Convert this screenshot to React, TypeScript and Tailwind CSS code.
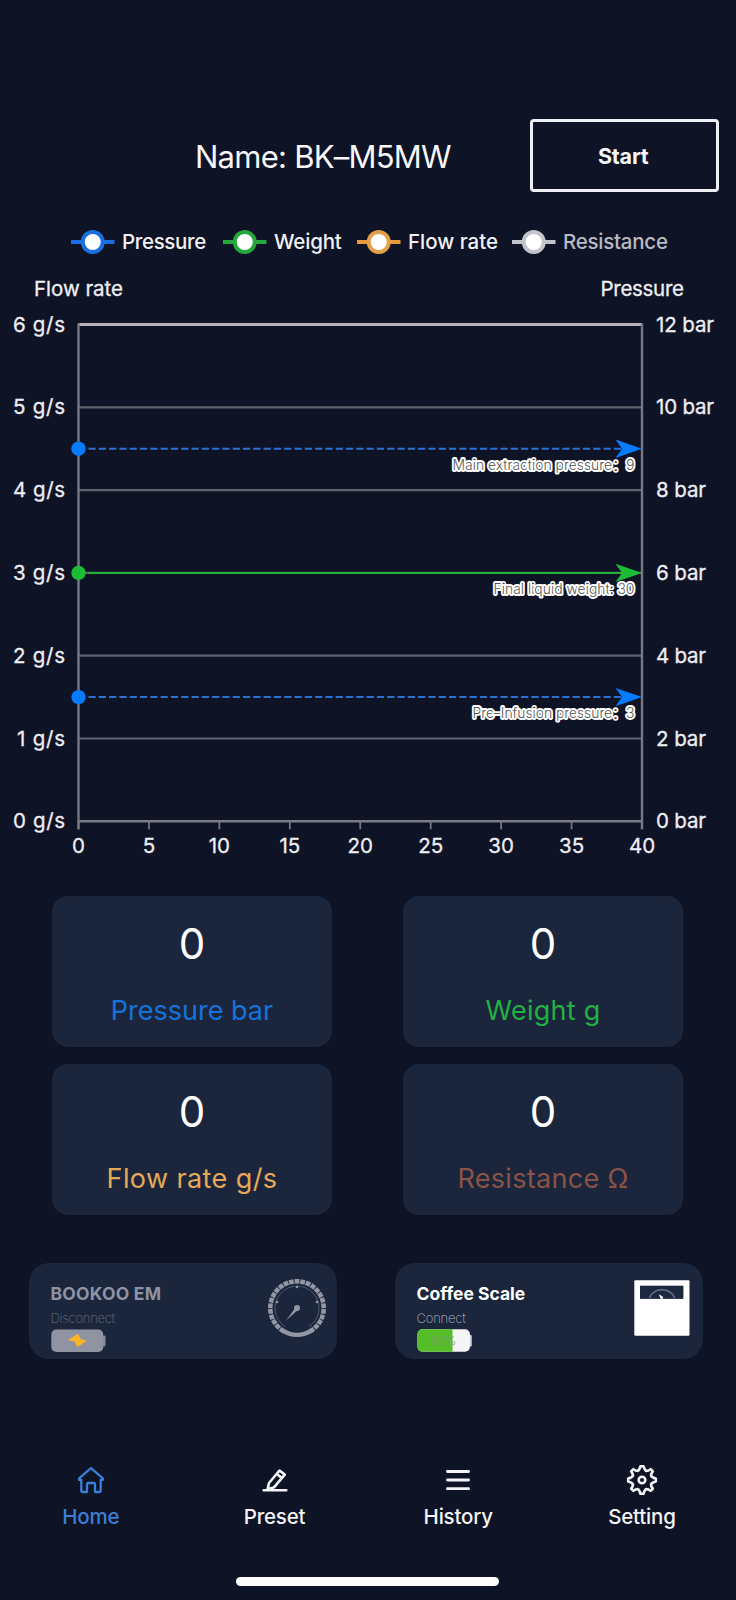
import type { ReactNode } from "react";

const LEFT = 78.5;
const RIGHT = 642;
const TOP = 54.5;
const STEP = 82.8;
const BOTTOM = TOP + STEP * 6;

const legend = [
  { label: "Pressure", line: "#1a6fe0", ring: "#1a6fe0", width: "w-[152px]", text: "text-[#f1f1f6] tracking-[-0.35px]" },
  { label: "Weight", line: "#25a83c", ring: "#25a83c", width: "w-[134px]", text: "text-[#f1f1f6] tracking-[-0.2px]" },
  { label: "Flow rate", line: "#e8993a", ring: "#e2a04c", width: "w-[155px]", text: "text-[#f1f1f6]" },
  { label: "Resistance", line: "#c4c5cc", ring: "#c4c5cc", width: "w-[156px]", text: "text-[#b9bac3] tracking-[-0.25px]" },
];

const lines = [
  { y: TOP + STEP * 1.5, color: "#067bff", stroke: "#2c71cf", label: "Main extraction pressure：9", len: 182, solid: false },
  { y: TOP + STEP * 3, color: "#1cbc35", stroke: "#22b03c", label: "Final liquid weight: 30", len: 141, solid: true },
  { y: TOP + STEP * 4.5, color: "#067bff", stroke: "#2c71cf", label: "Pre–Infusion pressure：3", len: 162, solid: false },
];

const metrics = [
  { label: "Pressure bar", color: "text-[#1473dd]" },
  { label: "Weight g", color: "text-[#22b045] tracking-[0.25px]" },
  { label: "Flow rate g/s", color: "text-[#e6a958] tracking-[0.4px]" },
  { label: "Resistance Ω", color: "text-[#8b5346] tracking-[0.3px]" },
];

function Chart() {
  return (
    <svg
      width="736"
      height="610"
      viewBox="0 0 736 610"
      className="block"
      fontFamily="Inter, 'Noto Sans CJK SC', sans-serif"
      fontSize="20.5"
      fill="#eeeef4"
    >
      <text x="34" y="25.5" textLength="89" stroke="#eeeef4" strokeWidth="0.3">Flow rate</text>
      <text x="600.5" y="25.5" textLength="83.5" stroke="#eeeef4" strokeWidth="0.3">Pressure</text>
      {[0, 1, 2, 3, 4, 5, 6].map((i) => {
        const y = TOP + STEP * i;
        return (
          <g key={i}>
            <line
              x1={LEFT}
              x2={RIGHT}
              y1={y}
              y2={y}
              stroke={i === 0 ? "#b5b4bd" : i === 6 ? "#7a7b87" : "#62636f"}
              strokeWidth={i === 0 ? 3 : i === 6 ? 2.6 : 2.2}
            />
            <g stroke="#eeeef4" strokeWidth="0.3">
              <text x="65" y={y + 7} textAnchor="end" textLength={i === 5 ? 48 : 52}>{`${6 - i} g/s`}</text>
              <text x="656" y={y + 7} textLength={i < 2 ? 58 : 50}>{`${12 - 2 * i} bar`}</text>
            </g>
          </g>
        );
      })}
      <line x1={LEFT} x2={LEFT} y1={TOP - 1} y2={BOTTOM + 8} stroke="#777884" strokeWidth="2.4" />
      <line x1={RIGHT} x2={RIGHT} y1={TOP - 1} y2={BOTTOM + 8} stroke="#777884" strokeWidth="2.4" />
      {[0, 1, 2, 3, 4, 5, 6, 7, 8].map((i) => {
        const x = LEFT + ((RIGHT - LEFT) / 8) * i;
        return (
          <g key={i}>
            <line x1={x} x2={x} y1={BOTTOM} y2={BOTTOM + 8} stroke="#777884" strokeWidth="1.8" />
            <text x={x} y="582.5" textAnchor="middle" stroke="#eeeef4" strokeWidth="0.3">{i * 5}</text>
          </g>
        );
      })}
      {lines.map((l) => (
        <g key={l.label}>
          <line
            x1={LEFT + 10}
            x2="622"
            y1={l.y}
            y2={l.y}
            stroke={l.stroke}
            strokeWidth="2"
            strokeDasharray={l.solid ? undefined : "7.2 3.1"}
          />
          <circle cx={LEFT} cy={l.y} r="7.2" fill={l.color} />
          <path d={`M642 ${l.y}L615.5 ${l.y - 9.2}L622 ${l.y}L615.5 ${l.y + 9.2}Z`} fill={l.color} />
          <text
            x="634.5"
            y={l.y + 21}
            textAnchor="end"
            fontSize="14"
            fontWeight="300"
            textLength={l.len}
            fill="#555555"
            stroke="#ffffff"
            strokeWidth="3.8"
            strokeLinejoin="round"
            paintOrder="stroke"
          >
            {l.label}
          </text>
        </g>
      ))}
    </svg>
  );
}

function Gauge() {
  const ticks = Array.from({ length: 25 }, (_, i) => -146 + (i * 292) / 24);
  return (
    <svg width="60" height="60" viewBox="-30 -30 60 60">
      {ticks.map((a) => (
        <rect key={a} x="-2.4" y="-29" width="4.8" height="4.6" fill="#9396a4" transform={`rotate(${a})`} />
      ))}
      <path d="M-14 22.9A26.8 26.8 0 0 0 14 22.9" fill="none" stroke="#9396a4" strokeWidth="4.4" />
      <path d="M-12 18.5A22 22 0 1 1 12 18.5" fill="none" stroke="#505a6c" strokeWidth="1" />
      <circle cx="0" cy="-21" r="1.3" fill="#9396a4" />
      <circle cx="-20" cy="-6" r="1.3" fill="#9396a4" />
      <circle cx="20" cy="-6" r="1.3" fill="#9396a4" />
      <circle cx="0" cy="0" r="3" fill="#9396a4" />
      <path d="M-1.8 0L-11 12.5L1 2Z" fill="#9396a4" />
    </svg>
  );
}

function ScaleIcon() {
  return (
    <svg width="56" height="56" viewBox="0 0 56 56">
      <rect x="0.3" y="0.2" width="55.2" height="55.6" rx="1" fill="#fff" />
      <rect x="6" y="5.7" width="43.4" height="13.2" fill="#1c2740" />
      <path d="M15.5 18A12.7 10 0 0 1 40.5 18" fill="none" stroke="#677084" strokeWidth="1.6" />
      <path d="M24.8 14.2L28.6 16.4L29.2 18.9L26.5 18.6Z" fill="#fff" />
    </svg>
  );
}

function Tab({ label, active, children }: { label: string; active?: boolean; children: ReactNode }) {
  return (
    <div className={`flex w-[183.7px] flex-col items-center ${active ? "text-[#3c7fd8]" : "text-[#f4f4f8]"}`}>
      <svg width="32" height="32" viewBox="0 0 32 32" fill="none" stroke="currentColor" strokeWidth="2.6" strokeLinejoin="round" strokeLinecap="round">
        {children}
      </svg>
      <span className="mt-[7px] text-[20.5px] leading-[28px] font-[450] tracking-[-0.2px]">{label}</span>
    </div>
  );
}

export default function App() {
  return (
    <div className="flex h-[1600px] w-[736px] flex-col overflow-hidden bg-[#0e1325] font-[Inter,'Noto_Sans_CJK_SC',sans-serif] text-white">
      <header className="flex h-[192px] items-end justify-between pr-[17px] pl-[195px]">
        <h1 className="mb-[12px] text-[31px] leading-[46px] font-normal tracking-[-0.75px] whitespace-nowrap text-[#f7f7fa]">Name: BK–M5MW</h1>
        <button className="flex h-[73px] w-[189.5px] items-center justify-center rounded-[4px] border-[3px] border-[#eeeef5] pt-[2px] pr-[2px] text-[21.5px] font-bold tracking-[-0.2px] text-[#f7f7fa]">
          Start
        </button>
      </header>

      <div className="mt-[34px] flex h-[31px] pl-[71px]">
        {legend.map((l) => (
          <div key={l.label} className={`flex shrink-0 items-center gap-[7.5px] ${l.width}`}>
            <svg width="43.5" height="26" viewBox="0 0 43.5 26" className="shrink-0">
              <line x1="0" x2="43.5" y1="13" y2="13" stroke={l.line} strokeWidth="4" />
              <circle cx="21.75" cy="13" r="10" fill="#fff" stroke={l.ring} strokeWidth="4" />
            </svg>
            <span className={`text-[20.5px] leading-[30px] font-[450] whitespace-nowrap ${l.text}`}>{l.label}</span>
          </div>
        ))}
      </div>

      <div className="mt-[13px] h-[610px]">
        <Chart />
      </div>

      <section className="mt-[16px] grid grid-cols-[280px_280px] gap-x-[71px] gap-y-[17px] pl-[52px]">
        {metrics.map((m) => (
          <div key={m.label} className="flex h-[151px] flex-col items-center rounded-[16px] bg-[#1b263d]">
            <span className="mt-[23px] text-[42px] leading-[50px]">0</span>
            <span className={`mt-[22px] text-[27px] leading-[40px] whitespace-nowrap ${m.color}`}>{m.label}</span>
          </div>
        ))}
      </section>

      <section className="mt-[47.5px] flex gap-[58px] pl-[28.5px]">
        <div className="flex h-[96px] w-[308px] justify-between rounded-[20px] bg-[#1b263d] pr-[10px] pl-[22px]">
          <div className="flex flex-col">
            <span className="mt-[19px] text-[17.5px] leading-[24px] font-bold tracking-[0.25px] text-[#8f93a3]">BOOKOO EM</span>
            <span className="mt-[2px] text-[13px] leading-[20px] font-extralight tracking-[-0.25px] text-[#676e80]">Disconnect</span>
            <svg width="56" height="24" viewBox="0 0 56 24" className="mt-[1px]">
              <rect x="50" y="6.5" width="4.5" height="11" rx="1" fill="#858999" />
              <rect x="0.3" y="0.6" width="52" height="22.4" rx="5" fill="#9093a2" />
              <path d="M27 4.8L17 11L23.8 12.8L26 18.2L36 11.8L29.8 10.2Z" fill="#fdb327" />
            </svg>
          </div>
          <div className="pt-[15.5px]">
            <Gauge />
          </div>
        </div>
        <div className="flex h-[96px] w-[308px] justify-between rounded-[20px] bg-[#1b263d] pr-[13px] pl-[22px]">
          <div className="flex flex-col">
            <span className="mt-[19px] text-[17.5px] leading-[24px] font-bold">Coffee Scale</span>
            <span className="mt-[2px] text-[13px] leading-[20px] font-extralight tracking-[-0.2px] text-[#b4b8c4]">Connect</span>
            <svg width="56" height="24" viewBox="0 0 56 24" className="mt-[1px]">
              <rect x="50" y="6" width="4.8" height="11.5" rx="1" fill="#c9ccd2" />
              <rect x="0.5" y="0.2" width="52.5" height="22.6" rx="5" fill="#f4f5f4" />
              <path d="M5.5 0.2H35.5V22.8H5.5A5 5 0 0 1 0.5 17.8V5.2A5 5 0 0 1 5.5 0.2Z" fill="#55bd28" />
              <text x="26.5" y="16" textAnchor="middle" fontSize="12" fontWeight="300" fill="#7f9f7a">65%</text>
            </svg>
          </div>
          <div className="pt-[17px]">
            <ScaleIcon />
          </div>
        </div>
      </section>

      <nav className="mt-[105px] -ml-[1px] flex">
        <Tab label="Home" active>
          <path d="M16 4L27.8 14.3C28.3 15.2 28 16 27 16H25.7V26.5Q25.7 28 24.2 28H20V20.5Q20 19 18.5 19H13.5Q12 19 12 20.5V28H7.8Q6.3 28 6.3 26.5V16H5C4 16 3.7 15.2 4.2 14.3Z" strokeWidth="2.3" />
        </Tab>
        <Tab label="Preset">
          <path d="M4.7 26.3H27.3M8.6 25.2L10 19L20.5 6.5L25.8 10.6L15.2 23.2L8.6 25.2M18 10L22.8 14" />
        </Tab>
        <Tab label="History">
          <path d="M5.4 7.5H26.6M5.4 16H26.6M5.4 24.7H26.6" strokeWidth="2.8" />
        </Tab>
        <Tab label="Setting">
          <g transform="translate(16 16)">
            <path d="M-1.5 -13.8H1.5Q2.6 -9.8 4.4 -9Q6.2 -9 8.6 -10.8L10.8 -8.6Q9 -6.2 9 -4.4Q9.8 -2.6 13.8 -1.5V1.5Q9.8 2.6 9 4.4Q9 6.2 10.8 8.6L8.6 10.8Q6.2 9 4.4 9Q2.6 9.8 1.5 13.8H-1.5Q-2.6 9.8 -4.4 9Q-6.2 9 -8.6 10.8L-10.8 8.6Q-9 6.2 -9 4.4Q-9.8 2.6 -13.8 1.5V-1.5Q-9.8 -2.6 -9 -4.4Q-9 -6.2 -10.8 -8.6L-8.6 -10.8Q-6.2 -9 -4.4 -9Q-2.6 -9.8 -1.5 -13.8Z" />
            <circle r="3.3" />
          </g>
        </Tab>
      </nav>

      <div className="mt-[46px] ml-[236px] h-[9px] w-[263px] rounded-full bg-white" />
    </div>
  );
}
